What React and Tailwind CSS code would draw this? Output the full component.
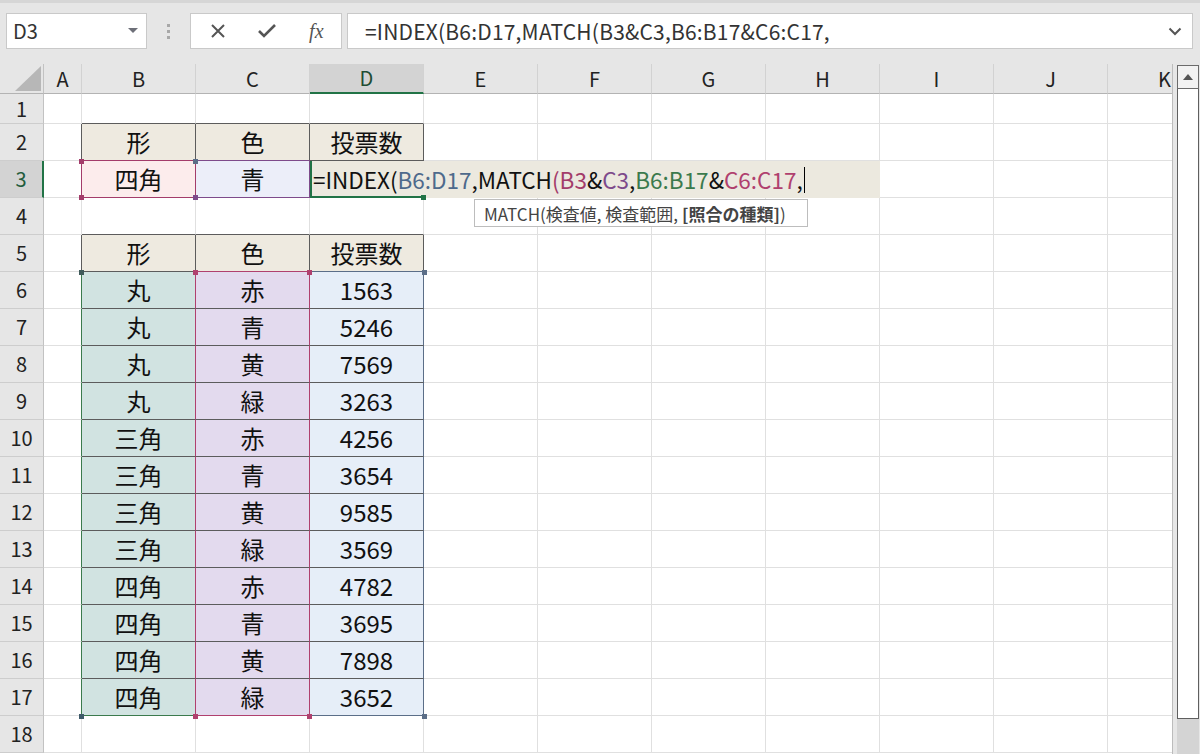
import React from 'react';

const COLS = ['A', 'B', 'C', 'D', 'E', 'F', 'G', 'H', 'I', 'J', 'K'];
const COL_W = { A: 'w-[38px]' };

const BR = {
  grid: 'border-r-[#e0e0e0]',
  dark: 'border-r-[#5c5c5c]',
  green: 'border-r-[#3b7a4d]',
  mag: 'border-r-[#b0406e]',
  blue: 'border-r-[#5b6e88]',
  pink: 'border-r-[#a33c6a]',
  purple: 'border-r-[#7e4b8b]',
};
const BB = {
  grid: 'border-b-[#e0e0e0]',
  dark: 'border-b-[#5c5c5c]',
  green: 'border-b-[#3b7a4d]',
  mag: 'border-b-[#b0406e]',
  blue: 'border-b-[#5b6e88]',
  pink: 'border-b-[#a33c6a]',
  purple: 'border-b-[#7e4b8b]',
};

const DATA = [
  ['丸', '赤', '1563'],
  ['丸', '青', '5246'],
  ['丸', '黄', '7569'],
  ['丸', '緑', '3263'],
  ['三角', '赤', '4256'],
  ['三角', '青', '3654'],
  ['三角', '黄', '9585'],
  ['三角', '緑', '3569'],
  ['四角', '赤', '4782'],
  ['四角', '青', '3695'],
  ['四角', '黄', '7898'],
  ['四角', '緑', '3652'],
];

const inTable = (r) => r >= 6 && r <= 17;

// right / bottom border colours for every cell
function borders(r, c) {
  let right = 'grid';
  let bottom = 'grid';
  if (c === 'A') {
    if (r === 2 || r === 5) right = 'dark';
    if (r === 3) right = 'pink';
    if (inTable(r)) right = 'green';
  }
  if (c === 'B') {
    if (r === 2 || r === 5) right = 'dark';
    if (r === 3) right = 'pink';
    if (inTable(r)) right = 'mag';
    if (r === 1 || r === 4 || r === 5) bottom = 'dark';
    if (r === 2 || r === 3) bottom = 'pink';
    if (r >= 6 && r <= 16) bottom = 'dark';
    if (r === 17) bottom = 'green';
  }
  if (c === 'C') {
    if (r === 2 || r === 5) right = 'dark';
    if (r === 3) right = 'purple';
    if (inTable(r)) right = 'mag';
    if (r === 1 || r === 4) bottom = 'dark';
    if (r === 2 || r === 3) bottom = 'purple';
    if (r === 5) bottom = 'mag';
    if (r >= 6 && r <= 16) bottom = 'dark';
    if (r === 17) bottom = 'mag';
  }
  if (c === 'D') {
    if (r === 2 || r === 5) right = 'dark';
    if (inTable(r)) right = 'blue';
    if (r === 1 || r === 2 || r === 4) bottom = 'dark';
    if (r === 5) bottom = 'blue';
    if (r >= 6 && r <= 16) bottom = 'dark';
    if (r === 17) bottom = 'blue';
  }
  return `${BR[right]} ${BB[bottom]}`;
}

function cellContent(r, c) {
  if (r === 2 || r === 5) {
    const t = { B: '形', C: '色', D: '投票数' }[c];
    if (t) return { text: t, bg: 'bg-[#eeeae0]' };
  }
  if (r === 3) {
    if (c === 'B') return { text: '四角', bg: 'bg-[#fcecec]' };
    if (c === 'C') return { text: '青', bg: 'bg-[#eceef9]' };
  }
  if (inTable(r)) {
    const row = DATA[r - 6];
    if (c === 'B') return { text: row[0], bg: 'bg-[#d1e3e1]' };
    if (c === 'C') return { text: row[1], bg: 'bg-[#e3daee]' };
    if (c === 'D') return { text: row[2], bg: 'bg-[#e6eef8]' };
  }
  return { text: '', bg: 'bg-white' };
}

function Cell({ r, c, h }) {
  const { text, bg } = cellContent(r, c);
  return (
    <div
      className={`${COL_W[c] || 'w-[114px]'} ${h} shrink-0 box-border border-r border-b ${borders(r, c)} ${bg} flex items-center justify-center text-[24px] leading-none text-[#111]`}
    >
      {text}
    </div>
  );
}

function RowHead({ n, h }) {
  const sel = n === 3;
  return (
    <div
      className={`w-[44px] ${h} shrink-0 box-border border-b border-b-[#cdcdcd] flex items-center justify-center text-[20px] leading-none ${
        sel
          ? 'bg-[#d3d3d3] text-[#235c3c] border-r-2 border-r-[#217346]'
          : 'bg-[#e6e6e6] text-[#222] border-r border-r-[#c2c2c2]'
      }`}
    >
      {n}
    </div>
  );
}

function Square({ x, y, color }) {
  return <div className={`absolute w-[5px] h-[5px] ${color}`} style={{ left: x - 2, top: y - 2 }} />;
}

function FormulaText() {
  return (
    <>
      <span>=INDEX(</span>
      <span className="text-[#4e6a8c]">B6:D17</span>
      <span>,MATCH</span>
      <span className="text-[#a33c6a]">(B3</span>
      <span>&amp;</span>
      <span className="text-[#7e4b8b]">C3</span>
      <span>,</span>
      <span className="text-[#3b7a4d]">B6:B17</span>
      <span>&amp;</span>
      <span className="text-[#b0406e]">C6:C17</span>
      <span>,</span>
    </>
  );
}

function Row({ n }) {
  const h = n === 1 ? 'h-[30px]' : 'h-[37px]';
  if (n === 3) {
    return (
      <div className="flex">
        <RowHead n={n} h={h} />
        {['A', 'B', 'C'].map((c) => (
          <Cell key={c} r={n} c={c} h={h} />
        ))}
        <div className="relative w-[570px] h-[37px] shrink-0 bg-[#ece9df] border-l-2 border-l-[#217346] flex items-center pl-[1px] text-[22.5px] leading-none text-[#111] whitespace-nowrap">
          <FormulaText />
          <span className="inline-block w-px h-[26px] bg-black ml-[1px]" />
          <div className="absolute left-[-2px] bottom-0 w-[115px] h-[2px] bg-[#217346]" />
        </div>
        {['I', 'J', 'K'].map((c) => (
          <Cell key={c} r={n} c={c} h={h} />
        ))}
      </div>
    );
  }
  return (
    <div className="flex">
      <RowHead n={n} h={h} />
      {COLS.map((c) => (
        <Cell key={c} r={n} c={c} h={h} />
      ))}
    </div>
  );
}

function TopBar() {
  return (
    <div className="h-[64px] shrink-0 bg-[#e6e6e6] border-t-[3px] border-t-[#d6d6d6] flex items-start pt-[10px] pl-[6px] pr-[7px]">
      <div className="w-[141px] h-[36px] bg-white border border-[#c9c9c9] flex items-center justify-between pl-[6px] pr-[8px]">
        <span className="text-[20px] leading-none text-[#333]">D3</span>
        <svg width="10" height="6" viewBox="0 0 10 6">
          <path d="M0 0 L10 0 L5 5 Z" fill="#6d6f78" />
        </svg>
      </div>
      <div className="w-[43px] h-[36px] flex flex-col items-center justify-center gap-[3px]">
        <div className="w-[3px] h-[3px] bg-[#a8a8a8]" />
        <div className="w-[3px] h-[3px] bg-[#a8a8a8]" />
        <div className="w-[3px] h-[3px] bg-[#a8a8a8]" />
      </div>
      <div className="w-[152px] h-[36px] bg-white border border-[#c9c9c9] flex items-center">
        <div className="w-[50px] flex justify-center ml-[2px]">
          <svg width="16" height="16" viewBox="0 0 16 16">
            <path d="M2 2 L14 14 M14 2 L2 14" stroke="#555" strokeWidth="2" />
          </svg>
        </div>
        <div className="w-[50px] flex justify-center">
          <svg width="20" height="16" viewBox="0 0 20 16">
            <path d="M2 8 L7 13 L18 2" stroke="#555" strokeWidth="2.6" fill="none" />
          </svg>
        </div>
        <div className="w-[50px] flex justify-center text-[20px] leading-none italic text-[#555] font-['Liberation_Serif',serif]">
          fx
        </div>
      </div>
      <div className="flex-1 ml-[5px] h-[36px] bg-white border border-[#c9c9c9] flex items-center justify-between pl-[17px] pr-[10px]">
        <span className="text-[21px] tracking-[0.2px] leading-none text-[#333] whitespace-nowrap">
          =INDEX(B6:D17,MATCH(B3&amp;C3,B6:B17&amp;C6:C17,
        </span>
        <svg width="14" height="9" viewBox="0 0 14 9">
          <path d="M1.5 1.5 L7 7 L12.5 1.5" stroke="#555" strokeWidth="2" fill="none" />
        </svg>
      </div>
    </div>
  );
}

function HeaderRow() {
  return (
    <div className="flex h-[30px]">
      <div className="w-[44px] h-[30px] shrink-0 bg-[#e6e6e6] border-r border-r-[#c2c2c2] border-b border-b-[#b3b3b3] box-border flex items-end justify-end pr-[2px] pb-[2px]">
        <svg width="26" height="25" viewBox="0 0 26 25">
          <path d="M26 0 L26 25 L0 25 Z" fill="#b7b7b7" />
        </svg>
      </div>
      {COLS.map((c) => {
        const sel = c === 'D';
        return (
          <div
            key={c}
            className={`${COL_W[c] || 'w-[114px]'} h-[30px] shrink-0 box-border border-r border-r-[#d2d2d2] flex items-center justify-center text-[20px] leading-none ${
              sel
                ? 'bg-[#d3d3d3] text-[#1f4d33] border-b-2 border-b-[#217346]'
                : 'bg-[#e6e6e6] text-[#222] border-b border-b-[#b3b3b3]'
            }`}
          >
            {c}
          </div>
        );
      })}
    </div>
  );
}

export default function App() {
  const rows = Array.from({ length: 18 }, (_, i) => i + 1);
  return (
    <div className="w-[1200px] h-[754px] overflow-hidden flex flex-col bg-white font-['Noto_Sans_CJK_JP','Noto_Sans',sans-serif]">
      <TopBar />
      <div className="flex flex-1 min-h-0">
        <div className="relative w-[1173px] shrink-0 overflow-hidden border-r border-r-[#bcbcbc]">
          <HeaderRow />
          {rows.map((n) => (
            <Row key={n} n={n} />
          ))}

          {/* range handles */}
          <Square x={81} y={97} color="bg-[#a33c6a]" />
          <Square x={195} y={97} color="bg-[#5b6e88]" />
          <Square x={81} y={133} color="bg-[#a33c6a]" />
          <Square x={195} y={133} color="bg-[#7e4b8b]" />
          <Square x={423} y={133} color="bg-[#217346]" />
          <Square x={81} y={208} color="bg-[#3f5a5a]" />
          <Square x={195} y={208} color="bg-[#b0406e]" />
          <Square x={309} y={208} color="bg-[#b0406e]" />
          <Square x={424} y={208} color="bg-[#5b6e88]" />
          <Square x={81} y={652} color="bg-[#3f5a6a]" />
          <Square x={195} y={652} color="bg-[#b0406e]" />
          <Square x={309} y={652} color="bg-[#b0406e]" />
          <Square x={424} y={652} color="bg-[#5b6e88]" />

          {/* function tooltip */}
          <div className="absolute left-[474px] top-[135px] w-[334px] h-[28px] bg-white border border-[#bdbdbd] flex items-center pl-[9px] text-[17px] leading-none text-[#444] whitespace-nowrap">
            MATCH(検査値, 検査範囲, <span className="font-bold ml-[4px]">[照合の種類]</span>)
          </div>
        </div>
        <div className="flex-1 bg-[#e6e6e6] flex flex-col items-center pl-[2px]">
          <div className="w-[22px] h-[24px] mt-px bg-[#f2f2f2] border border-[#6b6b6b] flex items-center justify-center">
            <svg width="10" height="6" viewBox="0 0 10 6">
              <path d="M0 6 L10 6 L5 0 Z" fill="#555" />
            </svg>
          </div>
          <div className="w-[22px] h-[630px] bg-white border border-[#5f5f5f] border-t-0" />
          <div className="w-[22px] flex-1 bg-[#d4d4d4]" />
        </div>
      </div>
    </div>
  );
}
